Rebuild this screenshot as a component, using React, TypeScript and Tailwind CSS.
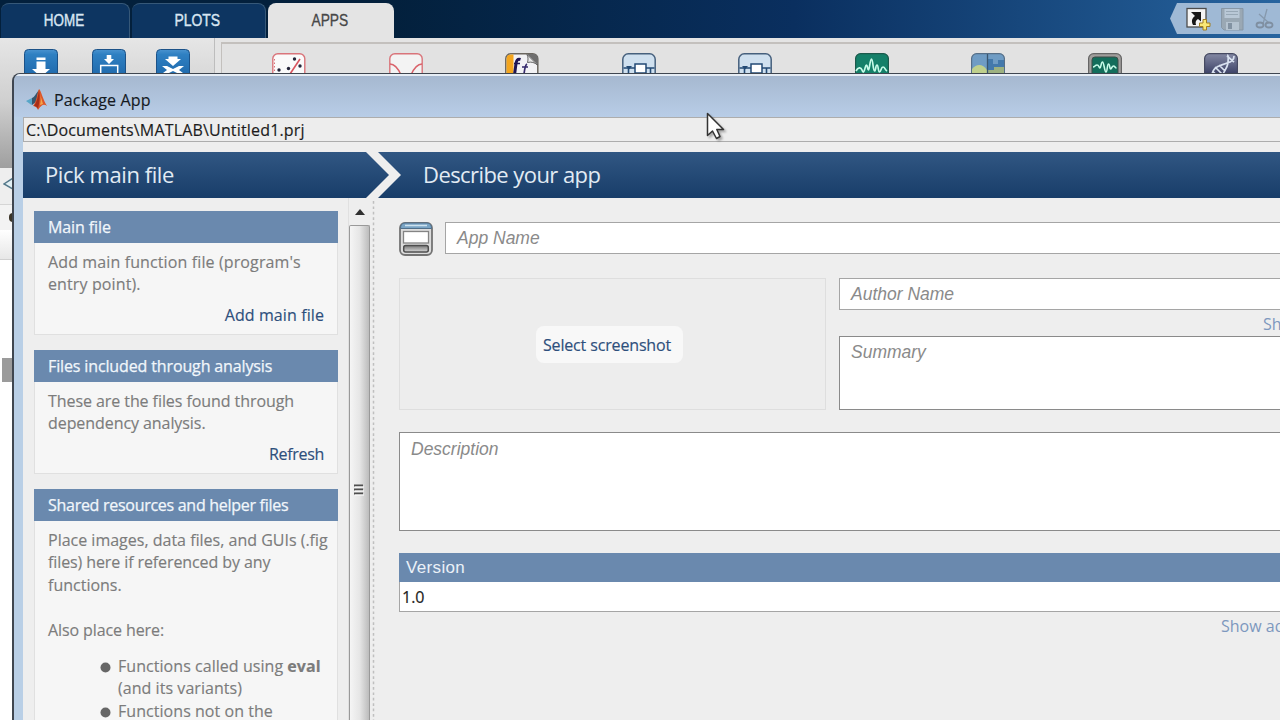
import type { ReactNode } from "react";

const sans = "font-['Open_Sans','Noto_Sans',sans-serif]";
const arial = "font-['Liberation_Sans',Arial,sans-serif]";

function BlueIcon({ children }: { children: ReactNode }) {
  return (
    <svg width="34" height="34" viewBox="0 0 34 34" className="shrink-0">
      <defs>
        <linearGradient id="blueFill" x1="0" y1="0" x2="0" y2="1">
          <stop offset="0" stopColor="#4a93cf" />
          <stop offset="0.15" stopColor="#2f80c2" />
          <stop offset="1" stopColor="#1a62a5" />
        </linearGradient>
      </defs>
      <rect x="0.5" y="0.5" width="33" height="33" rx="4" fill="url(#blueFill)" stroke="#1c5288" />
      {children}
    </svg>
  );
}

function GalleryIcon({ children }: { children: ReactNode }) {
  return (
    <div className="w-[116.5px] shrink-0">
      <svg width="34" height="34" viewBox="0 0 34 34">{children}</svg>
    </div>
  );
}

function SimulinkIcon() {
  return (
    <GalleryIcon>
      <rect x="0.8" y="0.8" width="32.4" height="32.4" rx="5.5" fill="#cfe0ef" stroke="#46607d" strokeWidth="1.5" />
      <path d="M1.500 15H13M24 15h8.500" stroke="#234a75" strokeWidth="1.500" fill="none" />
      <path d="M4 13h6l-3 3.500z" fill="#234a75" />
      <path d="M6.500 14v9M28.500 15v7" stroke="#234a75" strokeWidth="1.600" />
      <rect x="13" y="11" width="11" height="9" fill="#fff" stroke="#234a75" strokeWidth="1.500" />
    </GalleryIcon>
  );
}

function Ribbon() {
  return (
    <div className="flex h-[130px] w-full bg-linear-to-b from-[#e6e6e6] via-[#cfcfcf] to-[#9f9f9f]">
      <div className="flex w-[215px] shrink-0 border-r border-[#bdbdbd] pt-[11px] pl-6">
        <div className="w-[67.500px]">
          <BlueIcon>
            <path d="M12.500 8.500h9v2.500h-9zM12.500 12.500h9V20H26l-9 8-9-8h4.500z" fill="#fff" />
          </BlueIcon>
        </div>
        <div className="w-16">
          <BlueIcon>
            <path d="M14.700 6h4.600v4H22l-5 5-5-5h2.700z" fill="#fff" />
            <rect x="8.700" y="16.500" width="17" height="14" fill="none" stroke="#fff" strokeWidth="1.500" />
          </BlueIcon>
        </div>
        <BlueIcon>
          <path d="M12.500 7.500h9V10H25l-8 7-8-7h3.500z" fill="#fff" />
          <path d="M6 17l5 0 6 3 6-3 5 0-5 4 4 3-6 0-4-2-4 2-6 0 4-3z" fill="#fff" />
        </BlueIcon>
      </div>
      <div className="flex min-w-0 flex-1 flex-col bg-[#e4e4e4] pl-[6px]">
        <div className="mt-[4px] flex h-[100px] min-w-0 overflow-hidden border-t-2 border-l border-[#c3c0bd] bg-[#e2e2e2] pt-[9px] pl-[50px]">
          <GalleryIcon>
            <rect x="0.8" y="0.8" width="32" height="32" rx="5" fill="#fafafa" stroke="#d9747a" strokeWidth="1.4" />
            <path d="M2.500 6v24" stroke="#d9747a" strokeDasharray="1.500 2" />
            <path d="M18 21L28 6" stroke="#d9545e" strokeWidth="1.6" />
            <circle cx="22.500" cy="6" r="1.700" fill="#25253a" />
            <circle cx="28" cy="13" r="1.700" fill="#25253a" />
            <circle cx="16.500" cy="15.500" r="1.700" fill="#25253a" />
            <circle cx="7" cy="17" r="1.700" fill="#25253a" />
          </GalleryIcon>
          <GalleryIcon>
            <rect x="0.8" y="0.8" width="32.400" height="32.400" rx="5" fill="#f3f3f3" stroke="#d9747a" strokeWidth="1.4" />
            <path d="M1 11c5 0 8 4 11 11M33 11c-5 0-8 4-11 11" stroke="#d9626a" strokeWidth="1.600" fill="none" />
          </GalleryIcon>
          <GalleryIcon>
            <rect x="0.8" y="0.8" width="32" height="32" rx="5" fill="#f2f2f5" stroke="#6a665f" strokeWidth="1.500" />
            <path d="M1.500 6Q1.500 1.500 6 1.500h2.500V33H1.500z" fill="#f3a51e" />
            <path d="M15.500 6.500c-3-1-4 1-4.500 4L9.500 22" stroke="#1f1654" strokeWidth="3" fill="none" />
            <path d="M9 10.500h6" stroke="#1f1654" strokeWidth="1.500" />
            <path d="M22 11c-2 1-2.500 6-3 10M17 14h6" stroke="#352a6c" strokeWidth="1.700" fill="none" />
            <path d="M22 1h6q5 0 5 5v6z" fill="#6e6e6e" />
            <path d="M22 1.500c1.500 3 1 6 .5 8 4-1 7 0 10 2.500z" fill="#e8e8e8" stroke="#555" strokeWidth="0.900" />
          </GalleryIcon>
          <SimulinkIcon />
          <SimulinkIcon />
          <GalleryIcon>
            <rect x="0.600" y="0.600" width="32.800" height="32.800" rx="5" fill="#148069" stroke="#1c5a4c" strokeWidth="1.200" />
            <path d="M1 18c2-4 5-4 6-1s1.500 3 2.500 0 1-5 2-5 1 5 2 5S15 6 16.500 6s1.500 12 3 12 1-6 2.500-6 1 7 2.500 7 1.500-5 3.500-5 2 3 4 4" stroke="#c6fbe9" strokeWidth="1.700" fill="none" />
          </GalleryIcon>
          <GalleryIcon>
            <rect x="0.600" y="0.600" width="32.800" height="32.800" rx="5" fill="#6f9cc4" stroke="#566f88" strokeWidth="1.200" />
            <path d="M1 16c5-6 11-5 15 1v16H1z" fill="#bfd08c" />
            <path d="M17 6h5v5h5V7h6v12H17z" fill="#4479ab" />
            <path d="M17 17h6v-3h10v19H17z" fill="#9db180" />
            <path d="M16.500 1v32" stroke="#3a5670" strokeWidth="1.300" />
          </GalleryIcon>
          <GalleryIcon>
            <rect x="0.600" y="0.600" width="32.800" height="32.800" rx="5" fill="#a09e9c" stroke="#666" strokeWidth="1.200" />
            <rect x="4" y="4" width="26" height="28" rx="3" fill="#126d5b" stroke="#3d4c48" />
            <path d="M5 14c2 0 2-2 4-2s2 3 3 3 1-6 2.500-6 2 10 3.500 10 1-8 2.500-8 1 5 2 5 1.500-3 3-3 1.500 2 3 2" stroke="#c6fbe9" strokeWidth="1.600" fill="none" />
          </GalleryIcon>
          <GalleryIcon>
            <defs>
              <linearGradient id="dnaFill" x1="0" y1="0" x2="0" y2="1">
                <stop offset="0" stopColor="#8489a4" />
                <stop offset="0.600" stopColor="#3e4468" />
                <stop offset="1" stopColor="#303558" />
              </linearGradient>
            </defs>
            <rect x="0.600" y="0.600" width="32.800" height="32.800" rx="5" fill="url(#dnaFill)" stroke="#464a62" strokeWidth="1.200" />
            <path d="M8 22c1-9 8-9 15-12 5-1 7-3 7-7M23 2c2 0 1 4 1 8-1 6-4 8-6 13M23 3l7 6M11 14l7 7M15 12l6 6M8.500 18l5 5" stroke="#d9e2f0" strokeWidth="1.700" fill="none" />
          </GalleryIcon>
        </div>
      </div>
    </div>
  );
}

function QuickAccess() {
  return (
    <svg width="110" height="31" viewBox="0 0 110 31" className="mt-[3px] shrink-0">
      <path d="M7 0H110V31H7L0 15.500z" fill="#9fb9d5" />
      <rect x="17" y="5.500" width="19" height="18.500" fill="#f4f4f4" stroke="#4c4c4c" strokeWidth="1.300" />
      <path d="M21 9h10v9.500l-3-2.500c-2 1-3 3-2 6h-3c-2-4-1-7 2-9z" fill="#171717" />
      <path d="M33 16.500h3.500v3.500H40v3.500h-3.500V27H33v-3.500h-3.500V20H33z" fill="#f9e877" stroke="#a27f22" strokeWidth="1" />
      <path d="M51.500 5.500H73V27H54l-2.500-2.500z" fill="#9aa8b4" stroke="#8797a6" />
      <path d="M54.500 6h15v9h-15z" fill="#b9c8d6" />
      <path d="M56 8.500h12M56 11.500h12" stroke="#98a8b6" />
      <path d="M56 19h13v8H56z" fill="#b5c3d0" />
      <path d="M58 20h4v6h-4z" fill="#8292a2" />
      <path d="M97 6l-4 15M89 11l10 9" stroke="#8699ad" strokeWidth="1.300" />
      <ellipse cx="90" cy="22" rx="3.500" ry="2.500" fill="none" stroke="#7f8fa1" strokeWidth="1.800" />
      <ellipse cx="99" cy="22" rx="3.500" ry="2.500" fill="none" stroke="#7f8fa1" strokeWidth="1.800" />
    </svg>
  );
}

function Desktop() {
  return (
    <div className="flex h-full w-full flex-col">
      <div className={`flex h-[38px] w-full shrink-0 bg-linear-to-r from-[#03203c] from-30% via-[#0a2f5f] via-62% to-[#27649f] text-[16px] ${arial}`}>
        <div className="mt-[3px] ml-px flex w-[129px] items-center justify-center rounded-t-lg border-t border-r border-[#365878] bg-[#0d3561] text-[#d8e6f2]">
          <span className="-translate-x-px scale-x-[0.84] [-webkit-text-stroke:0.4px]">HOME</span>
        </div>
        <div className="mt-[3px] ml-[2px] flex w-[134px] items-center justify-center rounded-t-lg border-t border-r border-[#365878] bg-[#0d3561] text-[#d8e6f2]">
          <span className="-translate-x-px scale-x-[0.87] [-webkit-text-stroke:0.4px]">PLOTS</span>
        </div>
        <div className="mt-[3px] ml-[2px] flex w-[126px] items-center justify-center rounded-t-lg bg-[#e4e4e4] text-[#474747]">
          <span className="-translate-x-[1.5px] scale-x-[0.86] [-webkit-text-stroke:0.3px]">APPS</span>
        </div>
        <div className="min-w-0 flex-1" />
        <QuickAccess />
      </div>
      <Ribbon />
      <div className="flex h-9 items-center bg-[#eeeeee] pl-[3px]">
        <svg width="10" height="14" viewBox="0 0 10 14" className="-mt-1"><path d="M10 1L1 7l9 5" fill="#e3f0f4" stroke="#54788a" strokeWidth="1.500" /></svg>
      </div>
      <div className="flex h-[26px] items-center border-t border-[#d5d5d5] bg-[#f3f3f3] pl-[9px]">
        <span className="h-[9px] w-2 rounded-full bg-[#3b3528]" />
      </div>
      <div className="h-[30px] border-b border-[#d0d0d0] bg-linear-to-b from-white to-[#e7e7e7]" />
      <div className="h-[98px] bg-white" />
      <div className="ml-0.5 h-6 bg-[#9b9b9b]" />
      <div className="flex-1 bg-white" />
    </div>
  );
}

function Card({ title, tracking, children }: { title: string; tracking: string; children: ReactNode }) {
  return (
    <section className="flex flex-col border border-t-0 border-[#e0e0e0] bg-[#f6f6f6]">
      <h2 className={`-mx-px flex h-8 items-center bg-[#6a89ae] pl-[14px] text-[16px] font-medium whitespace-nowrap text-[#f1f6fb] [-webkit-text-stroke:0.25px] ${tracking}`}>
        <span>{title}</span>
      </h2>
      <div className="flex flex-col pt-[8px] pl-[13px] text-[16px] leading-[22.400px] whitespace-nowrap text-[#7c7c7c] [-webkit-text-stroke:0.15px]">{children}</div>
    </section>
  );
}

function Action({ tracking, children }: { tracking: string; children: ReactNode }) {
  return <div className={`mt-2 mr-[13px] h-[30.200px] text-right text-[#2e4f7c] ${tracking}`}>{children}</div>;
}

function Bullet({ children }: { children: ReactNode }) {
  return (
    <li className="flex gap-[7px]">
      <svg width="11" height="11" viewBox="0 0 11 11" className="mt-[7px] shrink-0"><circle cx="5.500" cy="5.500" r="5" fill="#666" /></svg>
      <span>{children}</span>
    </li>
  );
}

function Sidebar() {
  return (
    <aside className="flex h-full w-[351px] shrink-0">
      <div className="ml-[11px] flex w-[304px] shrink-0 flex-col gap-[15px] pt-[13px]">
        <Card title="Main file" tracking="tracking-[-0.1px]">
          <p className="tracking-[0.12px]">Add main function file (program&apos;s<br />entry point).</p>
          <Action tracking="tracking-[0.1px]">Add main file</Action>
        </Card>
        <Card title="Files included through analysis" tracking="tracking-[-0.13px]">
          <p className="tracking-[-0.07px]">These are the files found through<br />dependency analysis.</p>
          <Action tracking="tracking-[-0.3px]">Refresh</Action>
        </Card>
        <Card title="Shared resources and helper files" tracking="tracking-[-0.28px]">
          <p>Place images, data files, and GUIs (.fig<br /><span className="tracking-[-0.1px]">files) here if referenced by any</span><br />functions.</p>
          <p className="mt-[22.400px] tracking-[-0.1px]">Also place here:</p>
          <ul className="mt-[14px] ml-[52px] tracking-[0.05px]">
            <Bullet>Functions called using <b>eval</b><br />(and its variants)</Bullet>
            <Bullet>Functions not on the</Bullet>
          </ul>
        </Card>
      </div>
      <div className="ml-[10px] flex w-[22px] shrink-0 flex-col border-l border-[#e0e0e0]">
        <div className="flex h-[27px] items-center justify-center">
          <svg width="10" height="6" viewBox="0 0 10 6"><path d="M5 0l5 6H0z" fill="#303030" /></svg>
        </div>
        <div className="flex flex-1 flex-col rounded-t-xs border border-b-0 border-[#999] bg-linear-to-r from-[#f5f5f5] via-[#e6e6e6] to-[#bcbcbc] pt-[258px] pl-[4px]">
          <svg width="10" height="12" viewBox="0 0 10 12"><path d="M0 1.500h9M0 5.500h9M0 9.500h9" stroke="#4f4f4f" strokeWidth="2" /><path d="M1 3h9M1 7h9M1 11h9" stroke="#fff" /></svg>
        </div>
      </div>
      <svg width="4" height="522" className="ml-[2px] shrink-0"><path d="M1.500 3V522" stroke="#bfbfbf" strokeWidth="1.500" strokeDasharray="2.700 2.700" /></svg>
    </aside>
  );
}

function AppIcon() {
  return (
    <svg width="34" height="34" viewBox="0 0 34 34" className="shrink-0">
      <defs>
        <linearGradient id="slot" x1="0" y1="0" x2="0" y2="1">
          <stop offset="0" stopColor="#777" />
          <stop offset="1" stopColor="#d8d8d8" />
        </linearGradient>
      </defs>
      <rect x="1" y="1" width="32" height="32" rx="5" fill="#dcdcdc" stroke="#737373" strokeWidth="1.800" />
      <path d="M1.500 6.500Q1.500 1 6 1h22q4.500 0 4.500 5.500z" fill="#78a3c4" stroke="#506f8a" />
      <path d="M6 3.500h22" stroke="#cde2ef" strokeWidth="1.300" />
      <rect x="4.500" y="9.500" width="25" height="11.500" fill="#fff" stroke="#848484" strokeWidth="1.300" />
      <rect x="4.700" y="23.500" width="24.600" height="6.500" rx="2" fill="url(#slot)" stroke="#4d4d4d" strokeWidth="1.500" />
    </svg>
  );
}

const field = `border border-r-0 bg-white text-[#8a8a8a] italic ${arial}`;

function DetailsForm() {
  return (
    <main className="flex min-w-0 flex-1 flex-col overflow-hidden pt-6 pl-[25px] whitespace-nowrap">
      <div className="flex gap-3">
        <AppIcon />
        <div className={`flex h-8 flex-1 items-center border-[#a5a5a5] pt-px pl-[11px] text-[17.500px] ${field}`}>App Name</div>
      </div>
      <div className="mt-[22px] flex h-[132px] gap-[13px]">
        <div className="flex w-[427px] shrink-0 items-center justify-center border border-[#dedede] bg-[#ededed] pr-[6px]">
          <div className="flex h-[37px] w-[147px] items-center justify-center rounded-lg bg-[#f8f8f8] pt-0.5 pr-[5px] text-[16px] tracking-[-0.15px] text-[#2e4f7c] [-webkit-text-stroke:0.15px]">
            Select screenshot
          </div>
        </div>
        <div className="flex min-w-0 flex-1 flex-col">
          <div className={`flex h-8 items-center border-[#a5a5a5] pt-px pl-[11px] text-[17.500px] ${field}`}>Author Name</div>
          <div className="h-[26px] pl-[424px] text-[16px] leading-[28px] text-[#7d98be]">Show more</div>
          <div className={`h-[74px] border-[#8a8a8a] pl-[11px] text-[17.500px] leading-[31px] ${field}`}>Summary</div>
        </div>
      </div>
      <div className={`mt-[22px] h-[99px] border-[#8a8a8a] pl-[11px] text-[17.500px] leading-[33px] ${field}`}>Description</div>
      <div className={`mt-[22px] flex h-[29px] items-center bg-[#6a89ae] pt-px pl-[7px] text-[17px] tracking-[0.35px] text-[#eaf1f8] ${arial}`}>Version</div>
      <div className="flex h-[30px] items-center border border-t-0 border-r-0 border-[#a5a5a5] bg-white pl-[2px] text-[16px] text-[#222] [-webkit-text-stroke:0.2px]">1.0</div>
      <div className="pl-[822px] text-[16px] leading-[28px] text-[#7d98be]">Show additional</div>
    </main>
  );
}

function MatlabLogo() {
  return (
    <svg width="21" height="21" viewBox="0 0 21 21" className="shrink-0">
      <path d="M0 12l6-3 3 3-3.500 4z" fill="#57a5c7" />
      <path d="M6 9c3-1 4-5 7-8l-3 12-4 3z" fill="#36566f" />
      <path d="M13 0c2 1 4 11 8 17-3-2-5-2-9 4-1-3-3-4-5-4C11 12 11 4 13 0z" fill="#dc572a" />
      <path d="M13 1c1 5 1 11-1 19-1-2-2-3-4-3 3-4 4-10 5-16z" fill="#a62e18" />
      <path d="M14 5c1 4 1 7 0 11l3-1z" fill="#f5a54a" />
    </svg>
  );
}

function PackageWindow() {
  return (
    <div className={`absolute top-[73px] left-[12px] flex h-[660px] w-[1290px] flex-col overflow-hidden rounded-tl-lg border-t-[1.500px] border-l-2 border-[#3f4650] bg-[#b9cfe6] ${sans}`}>
      <div className="flex h-[43px] w-full shrink-0 items-center gap-[7px] border-t-2 border-[#e6edf5] bg-linear-to-b from-[#a6b8d0] to-[#b8cde7] pt-[6px] pl-[12px] text-[16px] tracking-[0.15px] text-[#15191f] [-webkit-text-stroke:0.15px]">
        <MatlabLogo />
        <span>Package App</span>
      </div>
      <div className="ml-[9px] flex min-h-0 flex-1 flex-col bg-[#eeeeee]">
        <div className="flex h-[25px] shrink-0 items-center border-t border-b border-l border-[#adadad] bg-[#ededed] pl-[2px] text-[16px] tracking-[0.17px] whitespace-nowrap text-[#1c1c1c] [-webkit-text-stroke:0.15px]">
          <span>C:\Documents\MATLAB\Untitled1.prj</span>
        </div>
        <div className="mt-[10px] flex h-[46px] w-full shrink-0 text-[22px] text-[#e2ebf4]">
          <div className="-mr-[11px] flex w-[366px] shrink-0 items-center bg-linear-to-b from-[#315783] to-[#183d69] pb-0.5 pl-[22px] tracking-[-0.42px] [clip-path:polygon(0_0,343px_0,366px_50%,343px_100%,0_100%)]">
            <span>Pick main file</span>
          </div>
          <div className="flex w-[930px] shrink-0 items-center bg-linear-to-b from-[#315783] to-[#183d69] pb-0.5 pl-[45px] tracking-[-0.57px] [clip-path:polygon(0_0,100%_0,100%_100%,0_100%,23px_50%)]">
            <span>Describe your app</span>
          </div>
        </div>
        <div className="flex min-h-0 flex-1 overflow-hidden">
          <Sidebar />
          <DetailsForm />
        </div>
      </div>
    </div>
  );
}

export default function App() {
  return (
    <div className="relative h-[720px] w-[1280px] overflow-hidden bg-white">
      <Desktop />
      <PackageWindow />
      <svg width="24" height="32" viewBox="0 0 24 32" className="absolute top-[111px] left-[705px] drop-shadow-[2px_2px_1px_rgba(0,0,0,0.3)]">
        <path d="M2.500 2.500V24.500L7.500 20L11.500 27.500L15 25.500L11.800 18.500H18.500z" fill="#fff" stroke="#333" strokeWidth="1.500" strokeLinejoin="round" />
      </svg>
    </div>
  );
}
